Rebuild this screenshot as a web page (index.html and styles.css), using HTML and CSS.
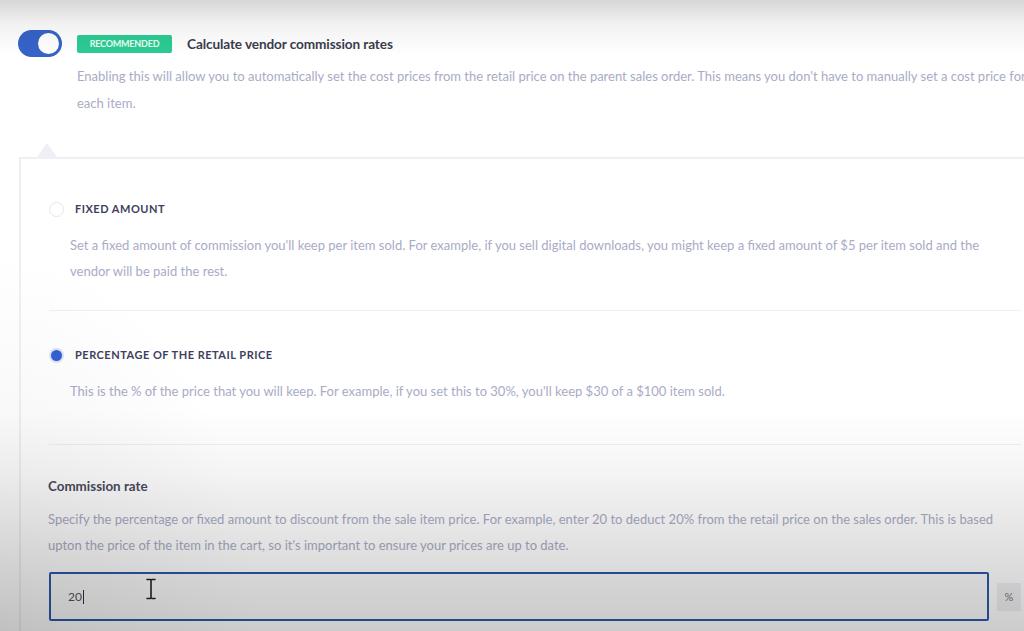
FILE: index.html
```html
<!DOCTYPE html>
<html>
<head>
<meta charset="utf-8">
<link rel="stylesheet" href="styles.css">
</head>
<body>
<div class="page">
  <div class="setting-head">
    <span class="toggle"><span class="knob"></span></span>
    <span class="badge">RECOMMENDED</span>
    <span class="title">Calculate vendor commission rates</span>
  </div>
  <p class="setting-desc">Enabling this will allow you to automatically set the cost prices from the retail price on the parent sales order. This means you don't have to manually set a cost price for each item.</p>

  <div class="panel">
    <span class="caret"></span>
    <div class="option option-first">
      <div class="option-label"><span class="radio"></span><span class="label-text">FIXED AMOUNT</span></div>
      <p class="option-desc">Set a fixed amount of commission you'll keep per item sold. For example, if you sell digital downloads, you might keep a fixed amount of $5 per item sold and the vendor will be paid the rest.</p>
    </div>
    <div class="option option-second">
      <div class="option-label"><span class="radio radio-on"></span><span class="label-text">PERCENTAGE OF THE RETAIL PRICE</span></div>
      <p class="option-desc">This is the % of the price that you will keep. For example, if you set this to 30%, you'll keep $30 of a $100 item sold.</p>
    </div>
    <div class="field">
      <div class="field-label">Commission rate</div>
      <p class="field-desc">Specify the percentage or fixed amount to discount from the sale item price. For example, enter 20 to deduct 20% from the retail price on the sales order. This is based upton the price of the item in the cart, so it's important to ensure your prices are up to date.</p>
      <div class="input-row">
        <div class="input"><span class="value">20</span><span class="caret-line"></span>
          <svg class="ibeam" width="12" height="22" viewBox="0 0 12 22"><path d="M2 1.5h3.2M6.8 1.5H10M6 2v18M2 20.5h3.2M6.8 20.5H10" stroke="#222" stroke-width="1.6" fill="none" stroke-linecap="round"/></svg>
        </div>
        <span class="addon">%</span>
      </div>
    </div>
  </div>
</div>
<div class="vignette"></div>
</body>
</html>
```

FILE: styles.css
```css
html, body {
  margin: 0;
  padding: 0;
  background: #ffffff;
  overflow: hidden;
  width: 1024px;
  height: 631px;
}
body {
  font-family: Lato, "Open Sans", sans-serif;
  color: #3a3c55;
  position: relative;
}
.page {
  padding: 30px 0 0 18px;
  width: 1100px;
}
.setting-head {
  display: flex;
  align-items: center;
  height: 27px;
}
.toggle {
  width: 44px;
  height: 27px;
  border-radius: 14px;
  background: #3563c8;
  display: flex;
  align-items: center;
  justify-content: flex-end;
  padding-right: 3px;
  box-sizing: border-box;
}
.knob {
  width: 21px;
  height: 21px;
  border-radius: 50%;
  background: #fff;
}
.badge {
  margin-left: 15px;
  background: #2ccb93;
  color: #e9fff5;
  font-size: 9px;
  font-weight: 700;
  letter-spacing: -0.2px;
  height: 18px;
  line-height: 18px;
  width: 95px;
  text-align: center;
  border-radius: 2px;
}
.title {
  margin-left: 15px;
  font-size: 13.6px;
  font-weight: 700;
  color: #3b3c4e;
  letter-spacing: -0.1px;
}
.setting-desc {
  margin: 6px 0 0 59px;
  width: 965px;
  font-size: 13px;
  line-height: 27px;
  color: #a9abc6;
}
.panel {
  position: relative;
  margin: 40px 0 0 1px;
  border: 2px solid #eef0f6;
  padding: 0 30px 30px 28px;
  width: 972px;
}
.caret {
  position: absolute;
  left: 16px;
  top: -16px;
  width: 0;
  height: 0;
  border-left: 10px solid transparent;
  border-right: 10px solid transparent;
  border-bottom: 14px solid #eef0f6;
}
.option {
  border-bottom: 1px solid #eff0f4;
}
.option-first {
  padding: 40px 0 26px;
}
.option-second {
  padding: 34px 0 40px;
}
.option-label {
  display: flex;
  align-items: center;
  height: 18px;
}
.radio {
  width: 15px;
  height: 15px;
  box-sizing: border-box;
  border: 1px solid #e5e6ee;
  border-radius: 50%;
  margin-right: 11px;
  margin-top: 3px;
}
.radio-on {
  width: 11px;
  height: 11px;
  margin: 3px 13px 0 2px;
  border: none;
  background: #3560d2;
  box-shadow: 0 0 0 2px rgba(53, 96, 210, 0.18);
}
.label-text {
  font-size: 11px;
  font-weight: 700;
  letter-spacing: 0.5px;
  color: #3d3f5c;
}
.option-desc {
  margin: 15px 12px 0 21px;
  font-size: 13px;
  line-height: 26px;
  color: #a9abc6;
}
.field {
  padding-top: 32px;
}
.field-label {
  font-size: 13.4px;
  font-weight: 700;
  line-height: 18px;
  color: #4a4b5e;
  margin-left: -1px;
}
.field-desc {
  margin: 11px 0 0 -1px;
  font-size: 13px;
  line-height: 26px;
  color: #a9abc6;
}
.input-row {
  display: flex;
  align-items: center;
  margin-top: 14px;
}
.input {
  position: relative;
  width: 940px;
  height: 49px;
  flex: none;
  box-sizing: border-box;
  border: 2px solid #2b59ab;
  border-radius: 2px;
  background: #fbfbfb;
  display: flex;
  align-items: center;
  padding-left: 17px;
}
.value {
  font-size: 12px;
  color: #555;
}
.caret-line {
  width: 1px;
  height: 14px;
  background: #333;
  margin-left: 1px;
}
.ibeam {
  position: absolute;
  left: 94px;
  top: 4px;
}
.addon {
  margin-left: 8px;
  width: 24px;
  height: 28px;
  line-height: 28px;
  text-align: center;
  background: #f0f0f4;
  color: #777;
  font-size: 11px;
}
.vignette {
  position: absolute;
  left: 0;
  top: 0;
  width: 1024px;
  height: 631px;
  pointer-events: none;
  background:
    radial-gradient(ellipse 260px 380px at 0px 631px, rgba(0, 0, 0, 0.06), rgba(0, 0, 0, 0)),
    linear-gradient(to bottom,
      rgba(0, 0, 0, 0.16) 0px,
      rgba(0, 0, 0, 0.05) 25px,
      rgba(0, 0, 0, 0) 55px,
      rgba(0, 0, 0, 0) 410px,
      rgba(0, 0, 0, 0.04) 470px,
      rgba(0, 0, 0, 0.12) 550px,
      rgba(0, 0, 0, 0.2) 631px);
}
```
